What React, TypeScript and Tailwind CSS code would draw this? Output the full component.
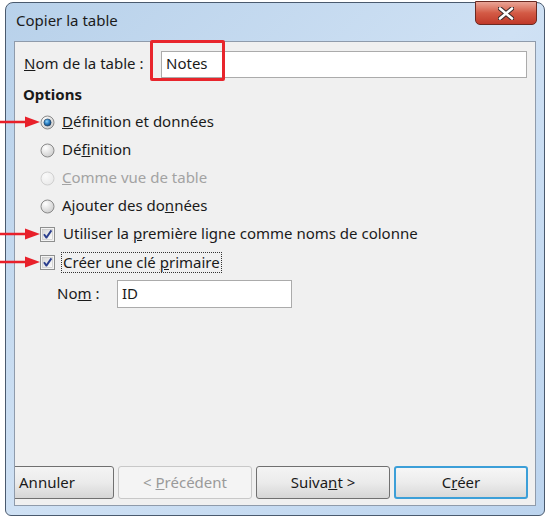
const font = { fontFamily: '"Noto Sans", "Open Sans", sans-serif' };

function Radio({ checked, disabled }: { checked?: boolean; disabled?: boolean }) {
  return (
    <svg width="15" height="15" viewBox="0 0 15 15" className="shrink-0">
      <defs>
        <radialGradient id={disabled ? "rgd" : "rg"} cx="0.35" cy="0.3" r="0.8">
          <stop offset="0" stopColor={disabled ? "#fafafa" : "#ffffff"} />
          <stop offset="1" stopColor={disabled ? "#e8e8e8" : "#c9c9c9"} />
        </radialGradient>
        <radialGradient id="rdot" cx="0.4" cy="0.35" r="0.7">
          <stop offset="0" stopColor="#8fd2f8" />
          <stop offset="0.5" stopColor="#2a7fc4" />
          <stop offset="1" stopColor="#0c3a6a" />
        </radialGradient>
      </defs>
      <circle
        cx="7.5"
        cy="7.5"
        r="6.5"
        fill={`url(#${disabled ? "rgd" : "rg"})`}
        stroke={disabled ? "#d0d0d0" : "#8a8a8a"}
      />
      {checked && <circle cx="7.5" cy="7.5" r="3.6" fill="url(#rdot)" stroke="#243a54" strokeWidth="0.6" />}
    </svg>
  );
}

function Check() {
  return (
    <svg width="15" height="15" viewBox="0 0 15 15" className="shrink-0">
      <defs>
        <linearGradient id="cbg" x1="0" y1="0" x2="1" y2="1">
          <stop offset="0" stopColor="#d6d6d6" />
          <stop offset="1" stopColor="#fdfdfd" />
        </linearGradient>
      </defs>
      <rect x="0.5" y="0.5" width="14" height="14" fill="#f4f4f4" stroke="#8e8f8f" />
      <rect x="2.5" y="2.5" width="10" height="10" fill="url(#cbg)" stroke="#c0c0c0" strokeWidth="0.6" />
      <path d="M4 7.2 L6.4 10.6 L11.4 3.4" fill="none" stroke="#2b3f8e" strokeWidth="1.9" strokeLinejoin="round" />
    </svg>
  );
}

// red annotation arrow pointing right
function Arrow({ top }: { top: number }) {
  return (
    <svg
      width="40"
      height="12"
      viewBox="0 0 40 12"
      className="absolute left-0"
      style={{ top: top - 6 }}
    >
      <line x1="0" y1="6" x2="28" y2="6" stroke="#e8202a" strokeWidth="2.5" />
      <path d="M25 0.5 L40 6 L25 11.5 Z" fill="#e8202a" />
    </svg>
  );
}

function Btn({
  children,
  disabled,
  primary,
}: {
  children: React.ReactNode;
  disabled?: boolean;
  primary?: boolean;
}) {
  return (
    <div
      className={
        "w-[134px] h-[33px] shrink-0 rounded-[3px] flex items-center justify-center text-[15px] " +
        (disabled
          ? "border border-[#c8c8c8] bg-[#f4f4f4] text-[#9a9a9a]"
          : primary
          ? "border-2 border-[#3c9fd8] bg-gradient-to-b from-[#f6f6f6] via-[#ececec] to-[#d9d9d9] text-[#1a1a1a]"
          : "border border-[#707070] bg-gradient-to-b from-[#f4f4f4] via-[#ebebeb] to-[#d6d6d6] text-[#1a1a1a]")
      }
    >
      <span className="whitespace-pre">{children}</span>
    </div>
  );
}

export default function App() {
  return (
    <div className="w-[547px] h-[517px] bg-white relative overflow-hidden" style={font}>
      <div className="absolute left-[5px] top-[2px] w-[540px] h-[514px] rounded-t-[8px] rounded-b-[6px] border border-[#4a5a6e] bg-gradient-to-br from-[#b8d1ea] via-[#cfe1f4] to-[#bcd4ee] flex flex-col">
        {/* Title bar */}
        <div className="h-[38px] shrink-0 flex items-center pl-[10px] pb-[3px] relative">
          <span className="text-[15px] text-[#1b1b1b]">Copier la table</span>
          <div className="absolute right-[7px] top-[-2px] w-[62px] h-[24px] rounded-b-[5px] border border-[#6b2a22] bg-gradient-to-b from-[#e9a597] via-[#d35a45] to-[#c0392a] flex items-center justify-center">
            <svg width="16" height="13" viewBox="0 0 16 13">
              <path
                d="M2 1.5 L14 11.5 M14 1.5 L2 11.5"
                stroke="#3a2a2a"
                strokeWidth="4.6"
                strokeLinecap="round"
              />
              <path
                d="M2 1.5 L14 11.5 M14 1.5 L2 11.5"
                stroke="#ffffff"
                strokeWidth="2.6"
                strokeLinecap="round"
              />
            </svg>
          </div>
        </div>

        {/* Client area */}
        <div className="mx-[8px] mb-[9px] flex-1 border border-[#8f9bab] bg-[#f0f0f0] flex flex-col overflow-hidden text-[15px] text-[#1a1a1a]">
          <div className="mt-[9px] h-[27px] flex items-center pl-[9px] pr-[8px]">
            <span className="w-[137px] shrink-0 pb-[3px]">
              <span className="underline">N</span>om de la table :
            </span>
            <div className="flex-1 h-[27px] border border-[#ababab] bg-white flex items-center pl-[4px] pb-[3px]">
              Notes
            </div>
          </div>

          <div className="mt-[7px] h-[20px] flex items-center pl-[8px] font-bold pb-[2px]">Options</div>

          <div className="mt-[3px] pl-[25px] flex flex-col">
            <div className="h-[28px] flex items-center gap-[7px]">
              <Radio checked />
              <span className="pb-[1px]">
                <span className="underline">D</span>éfinition et données
              </span>
            </div>
            <div className="h-[28px] flex items-center gap-[7px]">
              <Radio />
              <span className="pb-[1px]">
                Dé<span className="underline">f</span>inition
              </span>
            </div>
            <div className="h-[28px] flex items-center gap-[7px] text-[#a3a3a3]">
              <Radio disabled />
              <span className="pb-[1px]">
                <span className="underline">C</span>omme vue de table
              </span>
            </div>
            <div className="h-[28px] flex items-center gap-[7px]">
              <Radio />
              <span className="pb-[1px]">
                Ajouter des do<span className="underline">n</span>nées
              </span>
            </div>
            <div className="h-[28px] flex items-center gap-[8px]">
              <Check />
              <span className="pb-[1px]">
                Utiliser la <span className="underline">p</span>remière ligne comme noms de colonne
              </span>
            </div>
            <div className="h-[28px] flex items-center gap-[6px]">
              <Check />
              <span className="border border-dotted border-[#333] px-[1px] leading-[18px] pb-[1px]">
                Créer une clé <span className="underline">p</span>rimaire
              </span>
            </div>
          </div>

          <div className="mt-[4px] h-[28px] flex items-center pl-[42px]">
            <span className="w-[60px] shrink-0 pb-[2px]">
              No<span className="underline">m</span> :
            </span>
            <div className="w-[175px] h-[28px] border border-[#ababab] bg-white flex items-center pl-[4px] pb-[2px]">
              ID
            </div>
          </div>

          <div className="mt-auto mb-[6px] ml-[-35px] flex gap-[4px]">
            <Btn>Annuler</Btn>
            <Btn disabled>
              {"< "}
              <span className="underline">P</span>récédent
            </Btn>
            <Btn>
              Suiva<span className="underline">n</span>t &gt;
            </Btn>
            <Btn primary>
              C<span className="underline">r</span>éer
            </Btn>
          </div>
        </div>
      </div>

      {/* Annotations */}
      <div className="absolute left-[150px] top-[40px] w-[75px] h-[41px] border-[3px] border-[#e8252c] rounded-[2px]" />
      <Arrow top={122} />
      <Arrow top={234} />
      <Arrow top={262} />
    </div>
  );
}
